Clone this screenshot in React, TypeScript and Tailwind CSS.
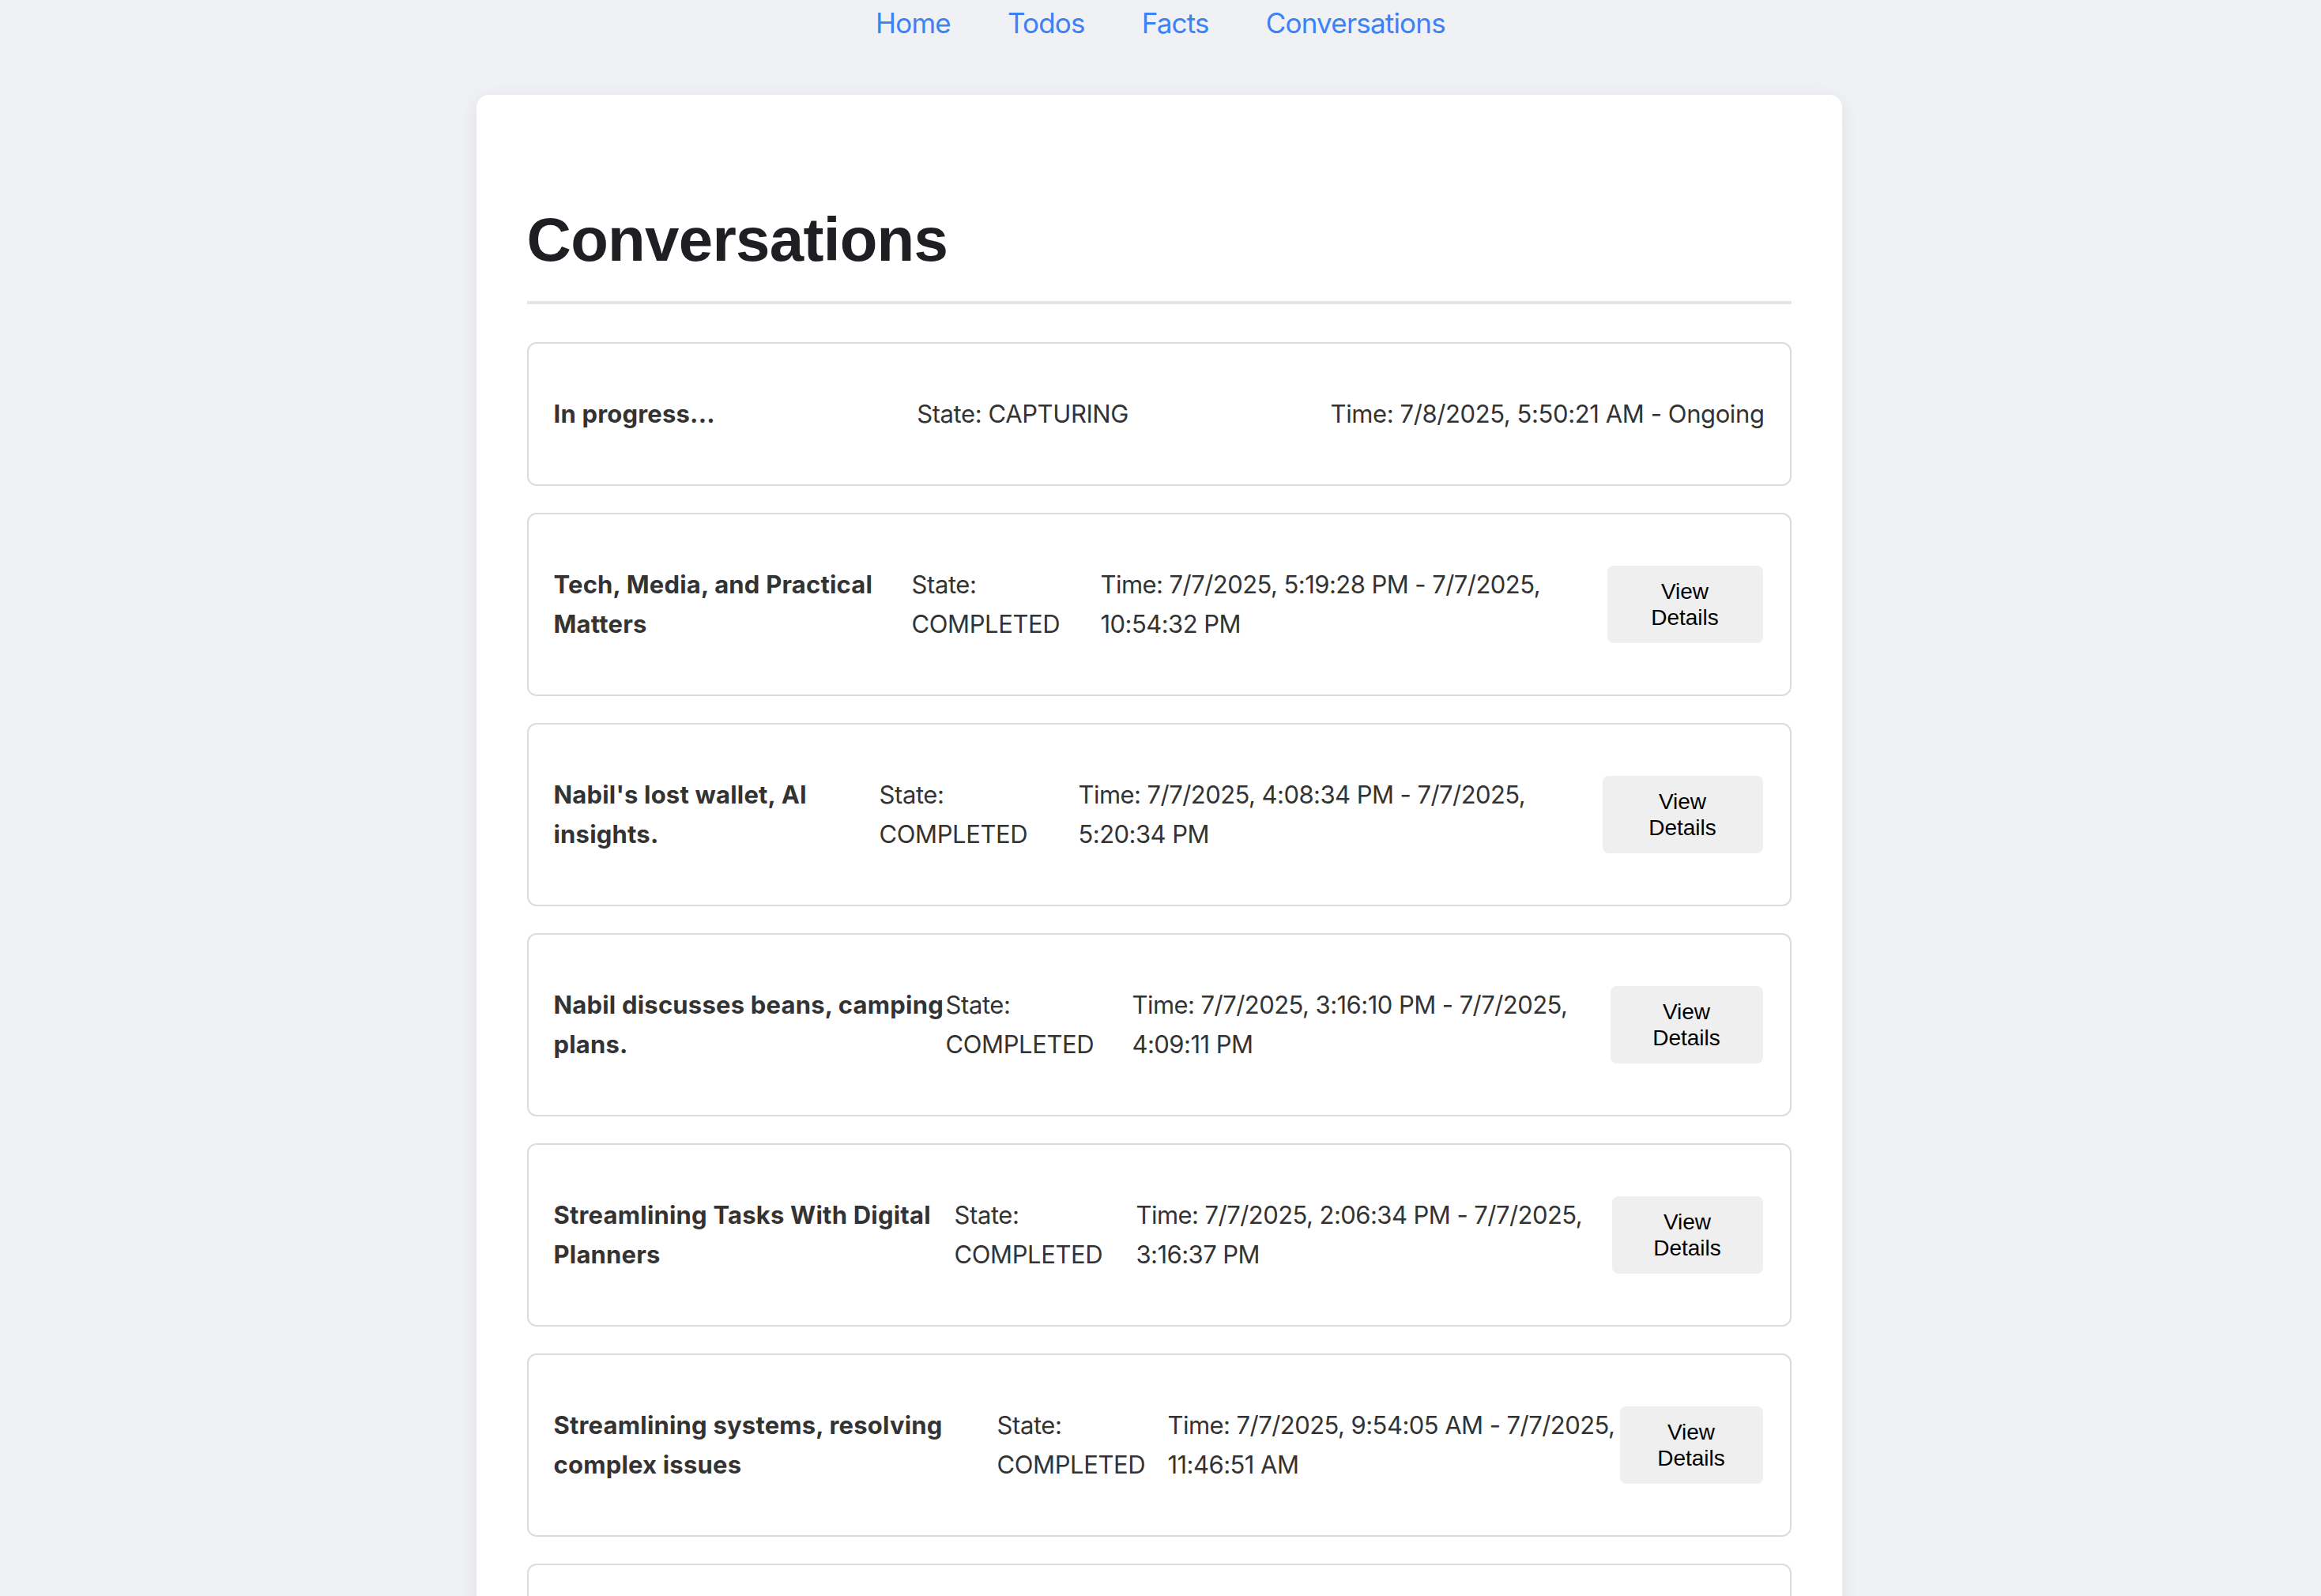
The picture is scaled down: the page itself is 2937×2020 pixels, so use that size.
import React from "react";

type Conversation = {
  title: string;
  state: string;
  time: string;
  // column widths for the wrapped rows, taken from the screenshot
  cols?: [string, string, string, string];
};

const conversations: Conversation[] = [
  {
    title: "In progress...",
    state: "State: CAPTURING",
    time: "Time: 7/8/2025, 5:50:21 AM - Ongoing",
  },
  {
    title: "Tech, Media, and Practical Matters",
    state: "State: COMPLETED",
    time: "Time: 7/7/2025, 5:19:28 PM - 7/7/2025, 10:54:32 PM",
    cols: ["w-[453px]", "w-[239px]", "w-[641px]", "w-[197px]"],
  },
  {
    title: "Nabil's lost wallet, AI insights.",
    state: "State: COMPLETED",
    time: "Time: 7/7/2025, 4:08:34 PM - 7/7/2025, 5:20:34 PM",
    cols: ["w-[412px]", "w-[252px]", "w-[663px]", "w-[203px]"],
  },
  {
    title: "Nabil discusses beans, camping plans.",
    state: "State: COMPLETED",
    time: "Time: 7/7/2025, 3:16:10 PM - 7/7/2025, 4:09:11 PM",
    cols: ["w-[496px]", "w-[236px]", "w-[605px]", "w-[193px]"],
  },
  {
    title: "Streamlining Tasks With Digital Planners",
    state: "State: COMPLETED",
    time: "Time: 7/7/2025, 2:06:34 PM - 7/7/2025, 3:16:37 PM",
    cols: ["w-[507px]", "w-[230px]", "w-[602px]", "w-[191px]"],
  },
  {
    title: "Streamlining systems, resolving complex issues",
    state: "State: COMPLETED",
    time: "Time: 7/7/2025, 9:54:05 AM - 7/7/2025, 11:46:51 AM",
    cols: ["w-[561px]", "w-[216px]", "w-[572px]", "w-[181px]"],
  },
  {
    title: "Morning planning and errands",
    state: "State: COMPLETED",
    time: "Time: 7/7/2025, 8:12:40 AM - 7/7/2025, 9:50:02 AM",
    cols: ["w-[470px]", "w-[240px]", "w-[625px]", "w-[195px]"],
  },
];

const ConversationRow = ({ c }: { c: Conversation }) => {
  if (!c.cols) {
    return (
      <div className="flex items-center justify-between">
        <span className="font-bold tracking-[0.2px]">{c.title}</span>
        <span>{c.state}</span>
        <span>{c.time}</span>
      </div>
    );
  }
  const [t, s, tm, b] = c.cols;
  return (
    <div className="flex items-center">
      <span className={`${t} shrink-0 font-bold tracking-[0.2px]`}>{c.title}</span>
      <span className={`${s} shrink-0`}>{c.state}</span>
      <span className={`${tm} shrink-0 tracking-[-0.55px]`}>{c.time}</span>
      <button
        className={`${b} shrink-0 rounded-[8px] bg-[#efefef] px-[32px] py-[16px] text-center text-[28px] leading-[33px] tracking-normal text-black`}
        style={{ fontFamily: '"Liberation Sans", Arial, sans-serif' }}
      >
        View Details
      </button>
    </div>
  );
};

export default function App() {
  return (
    <div
      className="min-h-screen bg-[#f0f1f5] text-[#333333]"
      style={{ fontFamily: 'Inter, "Noto Sans", sans-serif' }}
    >
      <nav className="flex justify-center gap-[72px] pt-[7px] text-[35px] leading-[44px] tracking-[-0.8px] text-[#3b82f6]">
        <a href="#">Home</a>
        <a href="#">Todos</a>
        <a href="#">Facts</a>
        <a href="#">Conversations</a>
      </nav>

      <main className="mx-auto mt-[69px] w-[1728px] -translate-x-[2px] rounded-[16px] bg-white px-[64px] pt-[137px] pb-[64px] shadow-[0_4px_24px_rgba(0,0,0,0.07)]">
        <h1
          className="border-b-[4px] border-[#e5e5e5] pb-[32px] text-[78px] leading-[92px] font-bold tracking-[-0.7px] text-[#1e1f22]"
          style={{ fontFamily: '"Liberation Sans", Arial, sans-serif' }}
        >
          Conversations
        </h1>

        <div className="mt-[48px] flex flex-col gap-[34px]">
          {conversations.map((c, i) => (
            <div
              key={i}
              className="rounded-[12px] border-2 border-[#dcdcdc] px-[32px] py-[64px] text-[31px] leading-[50px] tracking-[-0.4px]"
            >
              <ConversationRow c={c} />
            </div>
          ))}
        </div>
      </main>
    </div>
  );
}
